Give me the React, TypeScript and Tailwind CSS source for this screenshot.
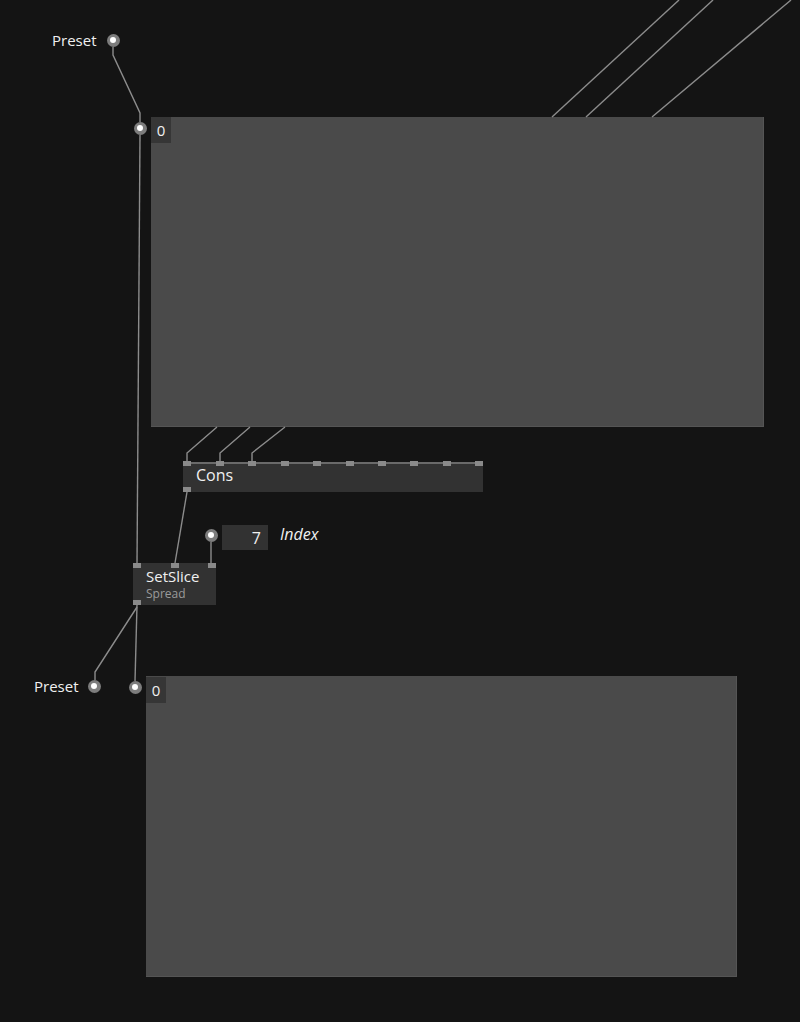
import React from "react";

type Wire = { points: string };

const wires: Wire[] = [
  // spread inputs leaving the top edge
  { points: "552,117 679,0" },
  { points: "586,117 713,0" },
  { points: "652,117 791,0" },
  // Preset -> IOBox
  { points: "113,47 113,55 140,113 140,122" },
  // IOBox -> SetSlice input
  { points: "140,135 137,564" },
  // IOBox -> Cons inputs
  { points: "217,427 187,453 187,462" },
  { points: "250,427 220,453 220,462" },
  { points: "285,427 252,453 252,462" },
  // Cons -> SetSlice
  { points: "187,492 175,563" },
  // Index pad -> SetSlice
  { points: "211,542 211,563" },
  // SetSlice -> outputs
  { points: "137,605 135,681" },
  { points: "137,607 95,672 95,680" },
];

const consPins = [187, 220, 252, 285, 317, 350, 382, 414, 447, 479];

function Pad({ x, y }: { x: number; y: number }) {
  return (
    <div
      className="absolute w-[13px] h-[13px] rounded-full bg-[#7d7d7d] flex items-center justify-center"
      style={{ left: x - 6.5, top: y - 6.5 }}
    >
      <div className="w-[6px] h-[6px] rounded-full bg-white" />
    </div>
  );
}

function Pin({ x, y }: { x: number; y: number }) {
  return (
    <div
      className="absolute w-[8px] h-[5px] bg-[#8a8a8a]"
      style={{ left: x - 4, top: y }}
    />
  );
}

export default function App() {
  return (
    <div
      className="relative w-[800px] h-[1022px] bg-[#141414] overflow-hidden text-[#f0f0f0]"
      style={{ fontFamily: '"Open Sans", "Noto Sans", sans-serif' }}
    >
      {/* upper spread editor */}
      <div className="absolute left-[151px] top-[117px] w-[613px] h-[310px] bg-[#4a4a4a] border-r border-b border-[#555]" />
      <div className="absolute left-[151px] top-[117px] w-[20px] h-[26px] bg-[#363636] flex items-center justify-center text-[15px] leading-none">
        0
      </div>

      {/* lower spread editor */}
      <div className="absolute left-[146px] top-[676px] w-[591px] h-[301px] bg-[#4a4a4a] border-r border-b border-[#555]" />
      <div className="absolute left-[146px] top-[677px] w-[20px] h-[26px] bg-[#363636] flex items-center justify-center text-[15px] leading-none">
        0
      </div>

      <svg className="absolute inset-0" width={800} height={1022}>
        {wires.map((w, i) => (
          <polyline
            key={i}
            points={w.points}
            fill="none"
            stroke="#8c8c8c"
            strokeWidth={1.4}
          />
        ))}
      </svg>

      {/* Cons node */}
      <div className="absolute left-[183px] top-[462px] w-[300px] h-[30px] bg-[#323232] border-t-2 border-[#6a6a6a] flex items-start pl-[13px]">
        <span className="text-[16px] leading-[22px]">Cons</span>
      </div>
      {consPins.map((x) => (
        <Pin key={x} x={x} y={461} />
      ))}
      <Pin x={187} y={487} />

      {/* SetSlice node */}
      <div className="absolute left-[133px] top-[563px] w-[83px] h-[42px] bg-[#323232] flex flex-col pl-[13px] pt-[3px]">
        <span className="text-[15px] leading-[20px]">SetSlice</span>
        <span className="text-[12px] leading-[16px] text-[#9a9a9a]">Spread</span>
      </div>
      <Pin x={137} y={563} />
      <Pin x={175} y={563} />
      <Pin x={212} y={563} />
      <Pin x={137} y={600} />

      {/* Index pad */}
      <div className="absolute left-[222px] top-[525px] w-[46px] h-[25px] bg-[#323232] flex items-center justify-end pr-[7px] text-[16px]">
        7
      </div>
      <div className="absolute left-[280px] top-[522px] text-[16px] italic">Index</div>

      {/* labels */}
      <div className="absolute left-[52px] top-[29px] text-[15px]">Preset</div>
      <div className="absolute left-[34px] top-[675px] text-[15px]">Preset</div>

      <Pad x={113} y={40} />
      <Pad x={140} y={128} />
      <Pad x={211} y={535} />
      <Pad x={94} y={686} />
      <Pad x={135} y={687} />
    </div>
  );
}
